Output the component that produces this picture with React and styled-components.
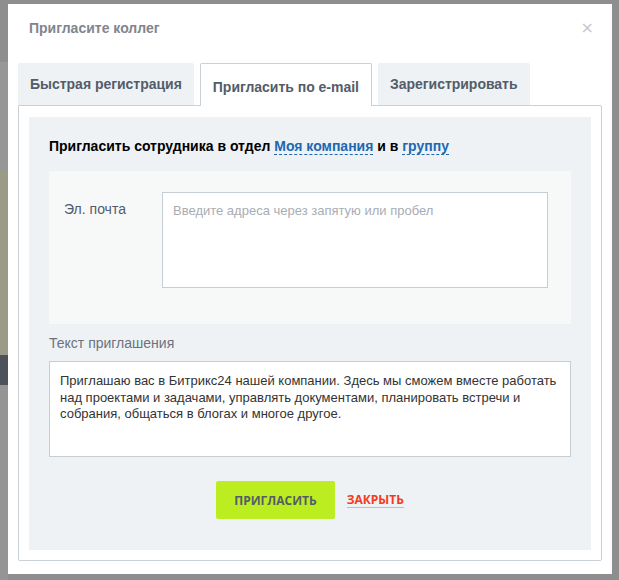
import React from "react";
import styled, { createGlobalStyle } from "styled-components";

const Global = createGlobalStyle`
  html, body { margin: 0; padding: 0; }
  body {
    width: 619px;
    height: 580px;
    overflow: hidden;
    font-family: "Liberation Sans", Arial, sans-serif;
    background: #8e8e8e;
  }
  * { box-sizing: border-box; }
`;

/* dimmed application behind the popup */
const Backdrop = styled.div`
  position: relative;
  width: 619px;
  height: 580px;
  display: flex;
  background: #8e8e8e;
`;

const SideStrip = styled.div`
  width: 8px;
  display: flex;
  flex-direction: column;
`;

const Band = styled.div`
  height: ${(p) => p.$h}px;
  flex: ${(p) => (p.$h ? "none" : 1)};
  background: ${(p) => p.$c};
`;

const Popup = styled.div`
  position: absolute;
  left: 8px;
  top: 4px;
  width: 604px;
  height: 570px;
  background: #fff;
  display: flex;
  flex-direction: column;
`;

const Header = styled.div`
  height: 59px;
  padding: 15px 21px 0;
  display: flex;
  justify-content: space-between;
  align-items: flex-start;
`;

const Title = styled.div`
  font-size: 14px;
  line-height: 18px;
  font-weight: bold;
  color: #80868e;
`;

const Close = styled.span`
  font-size: 16px;
  line-height: 18px;
  color: #c4c8cc;
  margin-right: -3px;
  font-family: "DejaVu Sans", sans-serif;
`;

const Body = styled.div`
  padding: 0 10px 13px;
  display: flex;
  flex-direction: column;
  flex: 1;
`;

const Tabs = styled.div`
  display: flex;
  gap: 6px;
  align-items: flex-end;
`;

const Tab = styled.div`
  height: ${(p) => (p.$active ? 43 : 42)}px;
  padding: 0 12px;
  display: flex;
  align-items: center;
  padding-top: ${(p) => (p.$active ? 3 : 0)}px;
  font-size: 14px;
  font-weight: bold;
  letter-spacing: -0.02px;
  color: #535c69;
  background: ${(p) => (p.$active ? "#fff" : "#eef2f4")};
  border: ${(p) => (p.$active ? "1px solid #c9d0d6" : "none")};
  border-bottom: none;
  border-radius: 2px 2px 0 0;
  margin-bottom: ${(p) => (p.$active ? -1 : 0)}px;
  position: relative;
  z-index: 1;
`;

const Frame = styled.div`
  flex: 1;
  border: 1px solid #c9d0d6;
  border-radius: 0 2px 2px 2px;
  padding: 11px 10px 10px;
  display: flex;
`;

const Panel = styled.div`
  flex: 1;
  background: #eef2f4;
  padding: 20px 20px 31px;
  display: flex;
  flex-direction: column;
`;

const Lead = styled.div`
  font-size: 14px;
  line-height: 18px;
  font-weight: bold;
  color: #000;
`;

const DashLink = styled.span`
  color: #2067b0;
  border-bottom: 1px dashed #2067b0;
`;

const FieldBox = styled.div`
  margin-top: 16px;
  height: 153px;
  background: #f7f9f9;
  padding: 21px 23px 0 15px;
  display: flex;
`;

const FieldLabel = styled.div`
  width: 98px;
  flex: none;
  font-size: 14px;
  line-height: 18px;
  padding-top: 8px;
  color: #535c69;
`;

const Input = styled.div`
  flex: 1;
  height: 96px;
  background: #fff;
  border: 1px solid #c6cdd3;
  padding: 10px 10px;
  font-size: 13px;
  line-height: 16px;
  color: #a8adb4;
`;

const Caption = styled.div`
  margin-top: 10px;
  font-size: 14px;
  line-height: 18px;
  color: #6a737f;
`;

const MessageBox = styled.div`
  margin-top: 9px;
  height: 96px;
  background: #fff;
  border: 1px solid #c6cdd3;
  padding: 11px 10px;
  font-size: 13px;
  line-height: 16.5px;
  color: #333;
`;

const Actions = styled.div`
  margin-top: 24px;
  display: flex;
  justify-content: center;
  align-items: center;
  gap: 12px;
`;

const Primary = styled.button`
  height: 38px;
  padding: 0 18px;
  border: none;
  border-radius: 2px;
  background: #bbed21;
  color: #535c69;
  font-family: "Open Sans", sans-serif;
  font-weight: bold;
  font-size: 12px;
  text-transform: uppercase;
`;

const CancelLink = styled.span`
  font-family: "Open Sans", sans-serif;
  font-weight: bold;
  font-size: 12px;
  line-height: 15px;
  color: #f23b22;
  border-bottom: 1px solid rgba(242, 59, 34, 0.4);
  text-transform: uppercase;
`;

export default function App() {
  return (
    <>
      <Global />
      <Backdrop>
        <SideStrip>
          <Band $h={62} $c="#8e8e8e" />
          <Band $h={108} $c="#979797" />
          <Band $h={185} $c="#9a9b86" />
          <Band $h={30} $c="#4c515b" />
          <Band $c="#959595" />
        </SideStrip>
        <Popup>
          <Header>
            <Title>Пригласите коллег</Title>
            <Close>×</Close>
          </Header>
          <Body>
            <Tabs>
              <Tab>Быстрая регистрация</Tab>
              <Tab $active>Пригласить по e-mail</Tab>
              <Tab>Зарегистрировать</Tab>
            </Tabs>
            <Frame>
              <Panel>
                <Lead>
                  Пригласить сотрудника в отдел <DashLink>Моя компания</DashLink> и в{" "}
                  <DashLink>группу</DashLink>
                </Lead>
                <FieldBox>
                  <FieldLabel>Эл. почта</FieldLabel>
                  <Input>Введите адреса через запятую или пробел</Input>
                </FieldBox>
                <Caption>Текст приглашения</Caption>
                <MessageBox>
                  Приглашаю вас в Битрикс24 нашей компании. Здесь мы сможем вместе работать над
                  проектами и задачами, управлять документами, планировать встречи и собрания,
                  общаться в блогах и многое другое.
                </MessageBox>
                <Actions>
                  <Primary>Пригласить</Primary>
                  <CancelLink>Закрыть</CancelLink>
                </Actions>
              </Panel>
            </Frame>
          </Body>
        </Popup>
      </Backdrop>
    </>
  );
}
